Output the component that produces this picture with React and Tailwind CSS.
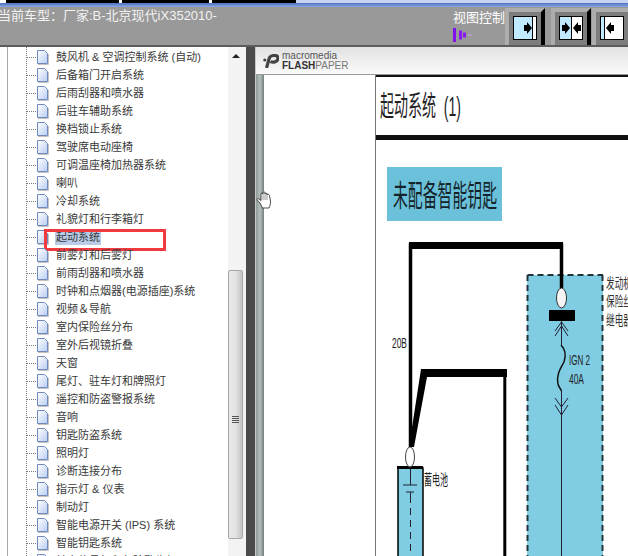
const items = [
  "鼓风机 & 空调控制系统 (自动)",
  "后备箱门开启系统",
  "后雨刮器和喷水器",
  "后驻车辅助系统",
  "换档锁止系统",
  "驾驶席电动座椅",
  "可调温座椅加热器系统",
  "喇叭",
  "冷却系统",
  "礼貌灯和行李箱灯",
  "起动系统",
  "前雾灯和后雾灯",
  "前雨刮器和喷水器",
  "时钟和点烟器(电源插座)系统",
  "视频＆导航",
  "室内保险丝分布",
  "室外后视镜折叠",
  "天窗",
  "尾灯、驻车灯和牌照灯",
  "遥控和防盗警报系统",
  "音响",
  "钥匙防盗系统",
  "照明灯",
  "诊断连接分布",
  "指示灯 & 仪表",
  "制动灯",
  "智能电源开关 (IPS) 系统",
  "智能钥匙系统",
  "转向信号灯和危险警告灯",
];

const cjk = "font-['Liberation_Sans','Noto_Sans_CJK_SC',sans-serif]";

const PageIcon = () => (
  <svg width="13" height="15" viewBox="0 0 13 15" className="shrink-0">
    <defs>
      <linearGradient id="pg" x1="0" y1="0" x2="1" y2="1">
        <stop offset="0" stopColor="#ffffff" />
        <stop offset="1" stopColor="#b9cdf2" />
      </linearGradient>
    </defs>
    <path d="M1.5 .5H8.5L11.5 3.5V13.5H1.5Z" fill="url(#pg)" stroke="#6f88bd" />
    <path d="M2 14.5H12.5V4" fill="none" stroke="#c4c4c4" />
  </svg>
);

const TreeRow = ({ label, selected }) => (
  <li className="relative flex h-[18px] items-center pl-[26px]">
    <span className="w-[10px] shrink-0 border-t border-dotted border-[#777]" />
    <PageIcon />
    <span className={`ml-[6px] whitespace-nowrap px-[1px] text-[11px] leading-[15px] text-[#3a3a3a] ${selected ? "bg-[#b9cdea]" : ""}`}>
      {label}
    </span>
    {selected && <span className="absolute left-[44px] top-[1px] h-[22px] w-[122px] border-[3px] border-[#f03a3f]" />}
  </li>
);

const ViewButton = ({ left, children }) => (
  <div className="h-[37px] w-[40px] shrink-0 bg-[#adadad] pl-[4px] pt-[4px]">
    <div className="relative h-[33px] w-[36px] bg-[#7d7d7d] pl-[4px] pt-[4px]">
      <div className={`flex h-[24px] w-[24px] border border-black ${left ? "bg-[#bfeaff]" : "bg-white"}`}>
        {children}
      </div>
      <span className="absolute bottom-0 right-0 top-[-4px] w-[4px] bg-black [clip-path:polygon(100%_0,100%_100%,0_100%,0_4px)]" />
    </div>
  </div>
);

const ArrowR = () => (
  <svg width="8" height="12" viewBox="0 0 8 12"><path d="M0 3H3V0L8 6 3 12V9H0Z" fill="#000" /></svg>
);
const ArrowL = () => (
  <svg width="8" height="12" viewBox="0 0 8 12"><path d="M8 3H5V0L0 6 5 12V9H8Z" fill="#000" /></svg>
);

const Diagram = () => (
  <svg width="252" height="416" viewBox="376 140 252 416" className="block">
    <rect x="387" y="167" width="115" height="54" fill="#6cc1da" />
    <text x="393" y="206" fontSize="30" textLength="104" lengthAdjust="spacingAndGlyphs" fill="#14242a" fontFamily="Noto Sans CJK SC">未配备智能钥匙</text>

    {/* fuse box */}
    <rect x="527" y="275" width="76" height="290" fill="#7fcce3" />
    <path d="M527.5 275H603M527.5 275V556M602.5 275V556" fill="none" stroke="#22333a" strokeWidth="2" strokeDasharray="6 4" />
    <text x="606" y="288" fontSize="14" textLength="26" lengthAdjust="spacingAndGlyphs" fill="#333" fontFamily="Noto Sans CJK SC">发动机</text>
    <text x="606" y="306" fontSize="14" textLength="26" lengthAdjust="spacingAndGlyphs" fill="#333" fontFamily="Noto Sans CJK SC">保险丝</text>
    <text x="606" y="325" fontSize="14" textLength="26" lengthAdjust="spacingAndGlyphs" fill="#333" fontFamily="Noto Sans CJK SC">继电器</text>

    {/* wires */}
    <path d="M410.500 447V245H561.500V288" fill="none" stroke="#000" strokeWidth="3.500" />
    <rect x="409" y="242" width="154" height="7" fill="#000" />
    <path d="M409 447L421 369H507V377H427L414 447Z" fill="#000" />
    <path d="M504.800 375V556" stroke="#000" strokeWidth="3" />

    <ellipse cx="561.500" cy="298" rx="5" ry="10" fill="#f5f5f5" stroke="#333" />
    <rect x="549" y="310" width="26" height="11" fill="#000" />
    <path d="M555 331L561.500 322L568 331M555 336L561.500 326L568 336M561.500 321V345" fill="none" stroke="#223" />
    <path d="M561 345C566 350 566 356 564 362C561 368 556 374 558 384C559 388 561 389 561.500 391" fill="none" stroke="#111" strokeWidth="1.500" />
    <path d="M561.500 391V415M555 398L561.500 407L568 398M555 405L561.500 415L568 405M561.500 415V556" fill="none" stroke="#223" />
    <text x="569" y="365" fontSize="15" textLength="21" lengthAdjust="spacingAndGlyphs" fill="#222" fontFamily="Liberation Sans">IGN 2</text>
    <text x="569" y="384" fontSize="15" textLength="15" lengthAdjust="spacingAndGlyphs" fill="#222" fontFamily="Liberation Sans">40A</text>
    <text x="392" y="348" fontSize="15" textLength="15" lengthAdjust="spacingAndGlyphs" fill="#222" fontFamily="Liberation Sans">20B</text>

    {/* battery */}
    <rect x="398" y="468" width="25" height="100" fill="#7fcce3" stroke="#000" strokeWidth="1.500" />
    <rect x="397" y="466" width="26" height="3" fill="#000" />
    <ellipse cx="410" cy="457" rx="4.500" ry="10" fill="#fff" stroke="#444" />
    <path d="M410.500 469V485M403 485H417M406 492H414M410.500 492V503" fill="none" stroke="#223" />
    <path d="M410.500 508V556" fill="none" stroke="#223" strokeDasharray="7 5" />
    <text x="424" y="485" fontSize="15" textLength="24" lengthAdjust="spacingAndGlyphs" fill="#222" fontFamily="Noto Sans CJK SC">蓄电池</text>
  </svg>
);

const HandCursor = () => (
  <svg width="16" height="18" viewBox="0 0 16 18" className="absolute left-[256px] top-[191px]">
    <path d="M4 12L.8 8.500L2.200 7.500L5 9.500V3C5 1.500 7 1.500 7 3V1.800C7 .5 9 .5 9 1.800V3C9 1.800 11 1.800 11 3V4C11 2.800 13 2.800 13.500 4.500L14.500 10C14.500 13 14 15 13 17H6.500Z" fill="#fff" stroke="#222" strokeWidth=".8" />
    <path d="M7 3V9M9 3V9M11 4V9" stroke="#555" strokeWidth=".6" />
  </svg>
);

export default function App() {
  return (
    <div className={`relative flex h-[556px] w-[628px] flex-col overflow-hidden bg-white ${cjk}`}>
      <div className="flex h-[3px] shrink-0 bg-[#c6d4f0]">
        <div className="w-[6px] bg-white" />
        <div className="w-[113px] bg-black" />
        <div className="w-[3px] bg-white" />
        <div className="w-[87px] bg-black" />
        <div className="w-[3px] bg-white" />
        <div className="w-[84px] bg-black" />
      </div>
      <div className="h-[4px] shrink-0 bg-gradient-to-b from-[#4a71c4] to-[#8ea8dd]" />

      <header className="flex h-[38px] shrink-0 overflow-hidden bg-[#999999]">
        <p className="-ml-[2px] w-[455px] shrink-0 whitespace-nowrap pt-[1px] text-[13px] leading-[16px] text-[#f2f2f2]">当前车型：厂家:B-北京现代iX352010-</p>
        <div className="flex w-[52px] shrink-0 flex-col pt-[3px]">
          <span className="whitespace-nowrap text-[13px] leading-[16px] text-white">视图控制</span>
          <svg width="20" height="16" viewBox="0 0 20 16" className="mt-[1px]">
            <path d="M1.500 1V15" stroke="#8010f0" strokeWidth="3" />
            <path d="M7.500 3.500V12.500M11.500 5.500V10.500" stroke="#8b18f0" strokeWidth="3" />
            <path d="M15 8H18.500" stroke="#c9a5f0" strokeWidth="1" />
          </svg>
        </div>
        <div className="flex pt-[1px]">
          <ViewButton left>
            <div className="flex flex-1 items-center justify-end border-r border-black"><ArrowR /></div>
            <div className="w-[3px] bg-white" />
          </ViewButton>
          <div className="w-[6px] shrink-0" />
          <ViewButton left>
            <div className="flex flex-1 items-center justify-end bg-[#bfeaff] pr-[1px]"><ArrowR /></div>
            <div className="w-px bg-black" />
            <div className="flex flex-1 items-center bg-white pl-px"><ArrowL /></div>
          </ViewButton>
          <div className="w-px shrink-0" />
          <ViewButton>
            <div className="w-[4px] shrink-0 border-r border-black bg-[#bfeaff]" />
            <div className="flex flex-1 items-center pl-px"><ArrowL /></div>
          </ViewButton>
        </div>
      </header>

      <div className="h-[2px] shrink-0 bg-[#5c5c5c]" />

      <main className="flex min-h-0 flex-1">
        <aside className="relative h-full w-[228px] shrink-0 overflow-hidden">
          <div className="absolute bottom-0 left-[7px] top-0 border-l border-[#aaa]" />
          <ul className="relative h-full pt-[1px]">
            <div className="absolute bottom-0 left-[26px] top-0 border-l border-dotted border-[#777]" />
            {items.map((label) => (
              <TreeRow key={label} label={label} selected={label === "起动系统"} />
            ))}
          </ul>
        </aside>

        <div className="flex w-[18px] shrink-0 flex-col bg-[#f3f3f3]">
          <div className="flex h-[17px] items-center justify-center pr-[2px]">
            <span className="h-0 w-0 border-x-[4px] border-b-[4px] border-x-transparent border-b-[#222]" />
          </div>
          <div className="mt-[206px] flex h-[269px] w-[15px] flex-col items-center justify-center rounded-[2px] border border-[#a8a8a8] bg-gradient-to-r from-[#e8e8e8] via-[#e4e4e4] to-[#c4c4c4] pt-[30px]">
            <div className="flex w-[7px] flex-col gap-[1px]">
              <span className="h-px bg-[#555]" />
              <span className="h-px bg-[#555]" />
              <span className="h-px bg-[#555]" />
              <span className="h-px bg-[#555]" />
            </div>
          </div>
        </div>

        <div className="w-[9px] shrink-0 bg-[#4b4b4b]" />

        <section className="flex min-w-0 flex-1 flex-col border-l border-[#c8c8c8]">
          <div className="flex h-[28px] shrink-0 items-center gap-[3px] border-b border-[#9a9a9a] bg-gradient-to-b from-[#e2e2e2] to-[#fafafa] pl-[7px]">
            <svg width="16" height="14" viewBox="0 0 16 14">
              <path d="M3.500 14L6.500 3.500C8 1 15 .5 15 4C15 8 10 9 7.500 7.500" fill="none" stroke="#444" strokeWidth="3.200" />
              <circle cx="1.800" cy="6" r="1.600" fill="#444" />
            </svg>
            <div className="flex flex-col font-['Liberation_Sans'] text-[10px]">
              <span className="leading-[10px] text-[#555]">macromedia</span>
              <span className="leading-[10px] text-[#777]"><b className="text-[#333]">FLASH</b>PAPER</span>
            </div>
          </div>
          <div className="flex min-h-0 flex-1">
            <div className="w-[8px] shrink-0 bg-gradient-to-r from-[#8d9a98] via-[#b4c0bd] to-[#74807e]" />
            <div className="w-[111px] shrink-0 bg-white" />
            <article className="min-w-0 flex-1 border-l border-[#777] bg-white">
              <div className="flex h-[65px] items-center border-y-[2px] border-y-[#111] border-b-[5px] pl-[4px]">
                <h1 className="origin-left scale-x-[0.5] whitespace-pre pt-[2px] text-[28px] font-normal leading-[30px] text-[#222]">起动系统  (1)</h1>
              </div>
              <Diagram />
            </article>
          </div>
        </section>
      </main>

      <HandCursor />
    </div>
  );
}
